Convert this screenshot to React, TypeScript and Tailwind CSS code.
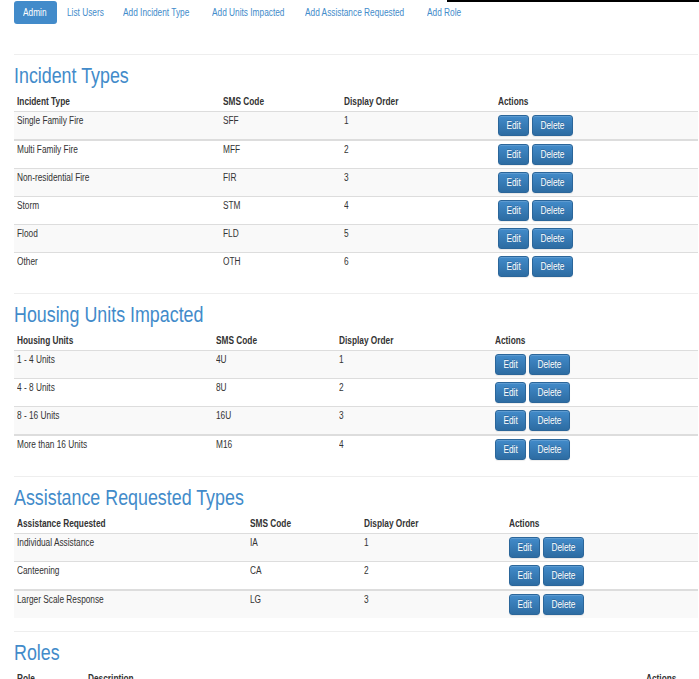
import React from "react";

const FONT = "font-['Liberation_Sans',Arial,sans-serif]";

function T({ children }: { children: React.ReactNode }) {
  return <span className="inline-block origin-left scale-x-[0.83] whitespace-nowrap">{children}</span>;
}

type SectionProps = {
  title: string;
  cols: string;
  headers: string[];
  rows: string[][];
  thick: number;
  actions?: boolean;
};

function Btn({ label, w }: { label: string; w: string }) {
  return (
    <span
      className={`inline-flex h-[21px] items-center justify-center rounded-[3px] border border-[#2b669a] bg-gradient-to-b from-[#428bca] to-[#2d6ca2] text-[10px] leading-[12px] text-white shadow-[inset_0_1px_0_rgba(255,255,255,0.15),0_1px_1px_rgba(0,0,0,0.075)] [text-shadow:0_-1px_0_rgba(0,0,0,0.2)] ${w}`}
    >
      <span className="inline-block scale-x-[0.83] whitespace-nowrap">{label}</span>
    </span>
  );
}

function Section({ title, cols, headers, rows, thick, actions = true }: SectionProps) {
  return (
    <section>
      <div className="h-px bg-[#eee]" />
      <h2 className="mt-[9px] h-[24px] text-[21.5px] font-normal leading-[24px] text-[#428bca]">
        <T>{title}</T>
      </h2>
      <div className={`mt-[5px] grid ${cols} border-b border-[#ddd]`}>
        {headers.map((h) => (
          <div key={h} className="pl-[3px] pt-[3px] pb-[3px] text-[10px] font-bold leading-[12px] text-[#333]">
            <T>{h}</T>
          </div>
        ))}
      </div>
      {rows.map((r, i) => (
        <div
          key={i}
          className={`grid ${cols} ${i % 2 === 0 ? "bg-[#f9f9f9]" : "bg-white"} ${
            i === 0 ? "" : i === thick ? "border-t-2 border-[#ddd]" : "border-t border-[#ddd]"
          }`}
        >
          {r.map((c, j) => (
            <div key={j} className="pl-[3px] pt-[3px] pb-[3px] text-[10px] leading-[12px] text-[#333]">
              <T>{c}</T>
            </div>
          ))}
          {actions && (
            <div className="flex gap-[3px] pl-[3px] pt-[3px] pb-[3px]">
              <Btn label="Edit" w="w-[31px]" />
              <Btn label="Delete" w="w-[41px]" />
            </div>
          )}
        </div>
      ))}
      <div className="h-[13px]" />
    </section>
  );
}

const navItems: { label: string; w: string }[] = [
  { label: "List Users", w: "w-[56px]" },
  { label: "Add Incident Type", w: "w-[89px]" },
  { label: "Add Units Impacted", w: "w-[93px]" },
  { label: "Add Assistance Requested", w: "w-[122px]" },
  { label: "Add Role", w: "w-[50px]" },
];

export default function App() {
  return (
    <div className={`relative min-h-[679px] w-[699px] overflow-hidden bg-white ${FONT}`}>
      <div className="absolute left-[447px] right-0 top-0 h-[2px] bg-black" />
      <div className="ml-[14px] w-[684px]">
        <nav className="flex pt-[1px]">
          <span className="mr-[1px] flex h-[23px] w-[43px] items-center rounded-[3px] bg-[#428bca] pl-[9px] text-[10px] text-white">
            <T>Admin</T>
          </span>
          {navItems.map((n) => (
            <span key={n.label} className={`flex h-[23px] items-center pl-[9px] text-[10px] text-[#428bca] ${n.w}`}>
              <T>{n.label}</T>
            </span>
          ))}
        </nav>
        <div className="h-[30px]" />
        <Section
          title="Incident Types"
          cols="grid-cols-[206px_121px_154px_1fr]"
          headers={["Incident Type", "SMS Code", "Display Order", "Actions"]}
          rows={[
            ["Single Family Fire", "SFF", "1"],
            ["Multi Family Fire", "MFF", "2"],
            ["Non-residential Fire", "FIR", "3"],
            ["Storm", "STM", "4"],
            ["Flood", "FLD", "5"],
            ["Other", "OTH", "6"],
          ]}
          thick={1}
        />
        <Section
          title="Housing Units Impacted"
          cols="grid-cols-[199px_123px_156px_1fr]"
          headers={["Housing Units", "SMS Code", "Display Order", "Actions"]}
          rows={[
            ["1 - 4 Units", "4U", "1"],
            ["4 - 8 Units", "8U", "2"],
            ["8 - 16 Units", "16U", "3"],
            ["More than 16 Units", "M16", "4"],
          ]}
          thick={3}
        />
        <Section
          title="Assistance Requested Types"
          cols="grid-cols-[233px_114px_145px_1fr]"
          headers={["Assistance Requested", "SMS Code", "Display Order", "Actions"]}
          rows={[
            ["Individual Assistance", "IA", "1"],
            ["Canteening", "CA", "2"],
            ["Larger Scale Response", "LG", "3"],
          ]}
          thick={2}
        />
        <Section
          title="Roles"
          cols="grid-cols-[71px_558px_1fr]"
          headers={["Role", "Description", "Actions"]}
          rows={[]}
          thick={-1}
        />
      </div>
    </div>
  );
}
